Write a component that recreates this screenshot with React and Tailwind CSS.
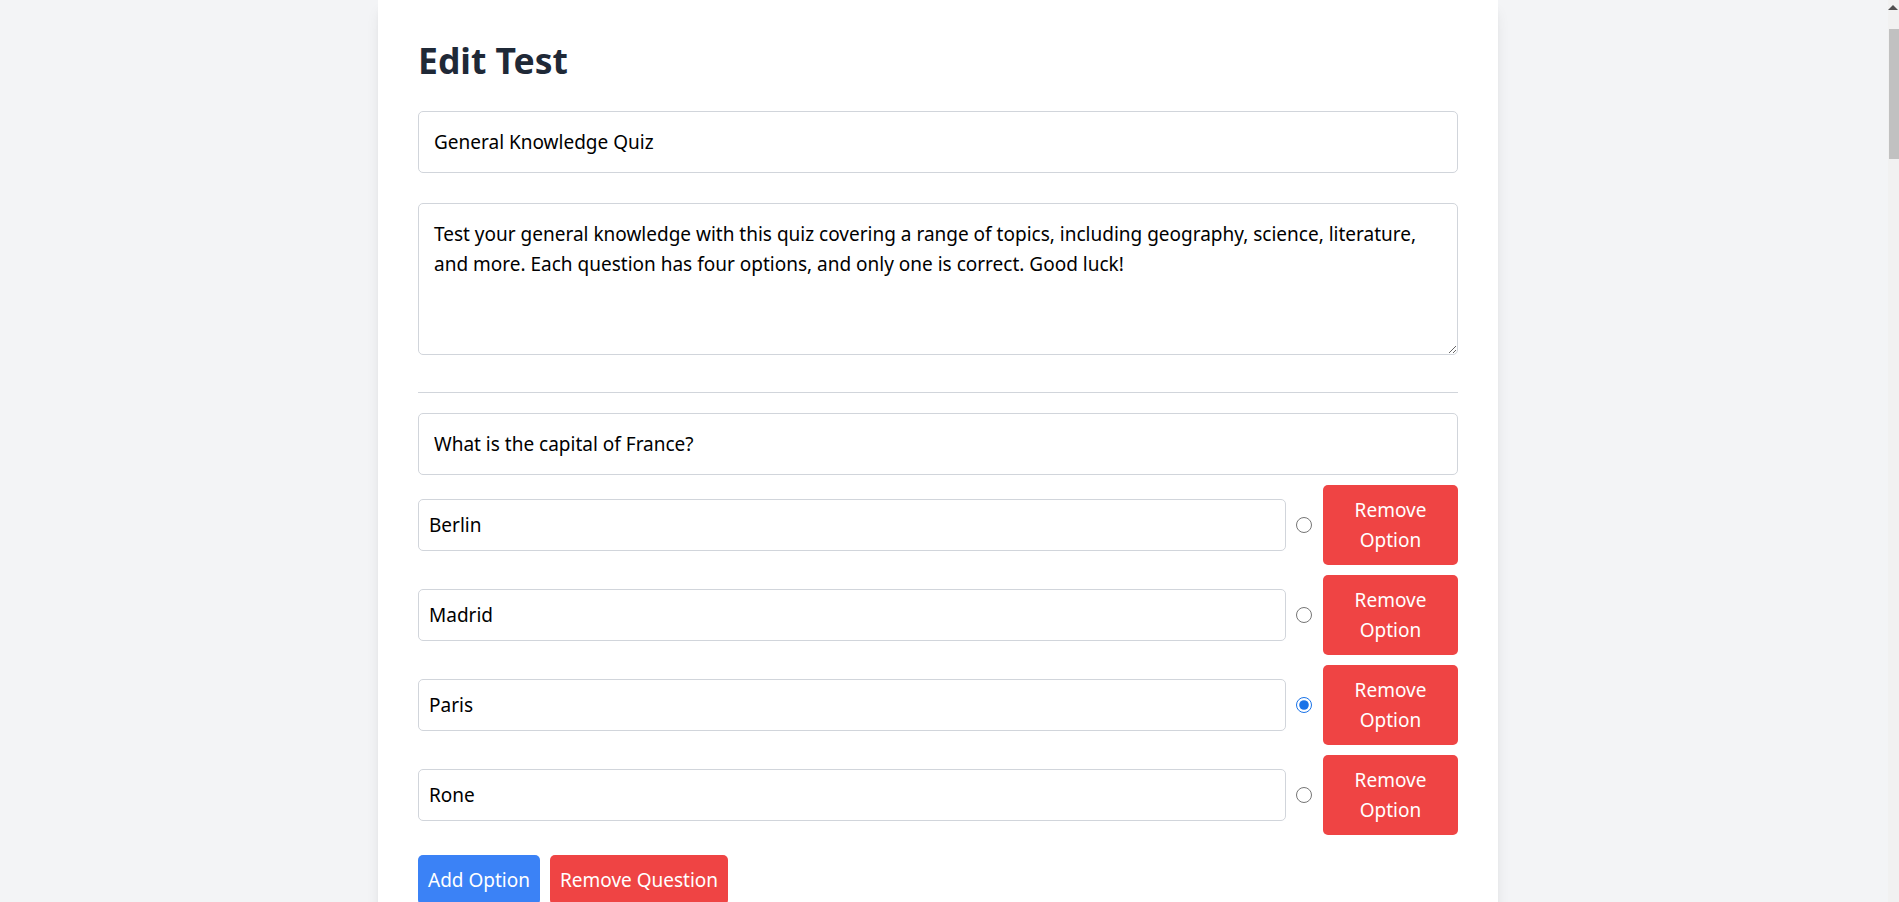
import { useState } from "react";

const font = "font-['Noto_Sans','Open_Sans',sans-serif]";

export default function App() {
  const [title, setTitle] = useState("General Knowledge Quiz");
  const [description, setDescription] = useState(
    "Test your general knowledge with this quiz covering a range of topics, including geography, science, literature, and more. Each question has four options, and only one is correct. Good luck!"
  );
  const [question, setQuestion] = useState("What is the capital of France?");
  const [options, setOptions] = useState(["Berlin", "Madrid", "Paris", "Rone"]);
  const [correct, setCorrect] = useState(2);

  const updateOption = (i, value) => {
    const next = [...options];
    next[i] = value;
    setOptions(next);
  };

  return (
    <div className={`min-h-screen bg-[#f3f4f6] flex justify-center pr-[23px] ${font}`}>
      <div className="w-[1120px] bg-white shadow-lg rounded-b-lg px-10 pt-10 pb-10">
        <h1 className="text-[35.5px] leading-[40px] font-bold text-[#1f2937] mb-[31px]">Edit Test</h1>

        <input
          className="block w-full h-[62px] border border-[#d1d5db] rounded-[5px] px-[15px] text-[19px] leading-[30px] text-black outline-none"
          value={title}
          onChange={(e) => setTitle(e.target.value)}
        />

        <textarea
          rows={4}
          className="block w-full h-[152px] mt-[30px] border border-[#d1d5db] rounded-[5px] p-[15px] text-[19px] leading-[30px] text-black outline-none"
          value={description}
          onChange={(e) => setDescription(e.target.value)}
        />

        <hr className="mt-[37px] mb-[20px] border-[#d1d5db]" />

        {/* question block */}
        <div>
          <input
            className="block w-full h-[62px] border border-[#d1d5db] rounded-[5px] px-[15px] text-[19px] leading-[30px] text-black outline-none mb-[10px]"
            value={question}
            onChange={(e) => setQuestion(e.target.value)}
          />

          {options.map((opt, i) => (
            <div key={i} className="flex items-center mb-[10px]">
              <input
                className="flex-1 h-[52px] border border-[#d1d5db] rounded-[5px] px-[10px] text-[19px] leading-[30px] text-black outline-none"
                value={opt}
                onChange={(e) => updateOption(i, e.target.value)}
              />
              <input
                type="radio"
                name="correct"
                className="w-4 h-4 m-0 ml-[10px] mr-[11px] accent-[#1a73e8]"
                checked={correct === i}
                onChange={() => setCorrect(i)}
              />
              <button className="w-[135px] py-[10px] rounded-[5px] bg-[#ef4444] text-white text-[19px] leading-[30px] text-center">
                Remove Option
              </button>
            </div>
          ))}

          <div className="flex gap-[10px] mt-[20px]">
            <button className="px-[10px] py-[10px] rounded-[5px] bg-[#3b82f6] text-white text-[19px] leading-[30px]">
              Add Option
            </button>
            <button className="px-[10px] py-[10px] rounded-[5px] bg-[#ef4444] text-white text-[19px] leading-[30px]">
              Remove Question
            </button>
          </div>
        </div>
      </div>

      {/* browser scrollbar */}
      <div className="fixed top-0 right-0 h-full w-[11px] bg-[#f1f1f1]">
        <div className="absolute top-[5px] right-[1px] w-0 h-0 border-l-[5px] border-r-[5px] border-b-[5px] border-l-transparent border-r-transparent border-b-[#505050]" />
        <div className="absolute top-[29px] left-[1px] right-0 h-[130px] bg-[#c1c1c1]" />
      </div>
    </div>
  );
}
